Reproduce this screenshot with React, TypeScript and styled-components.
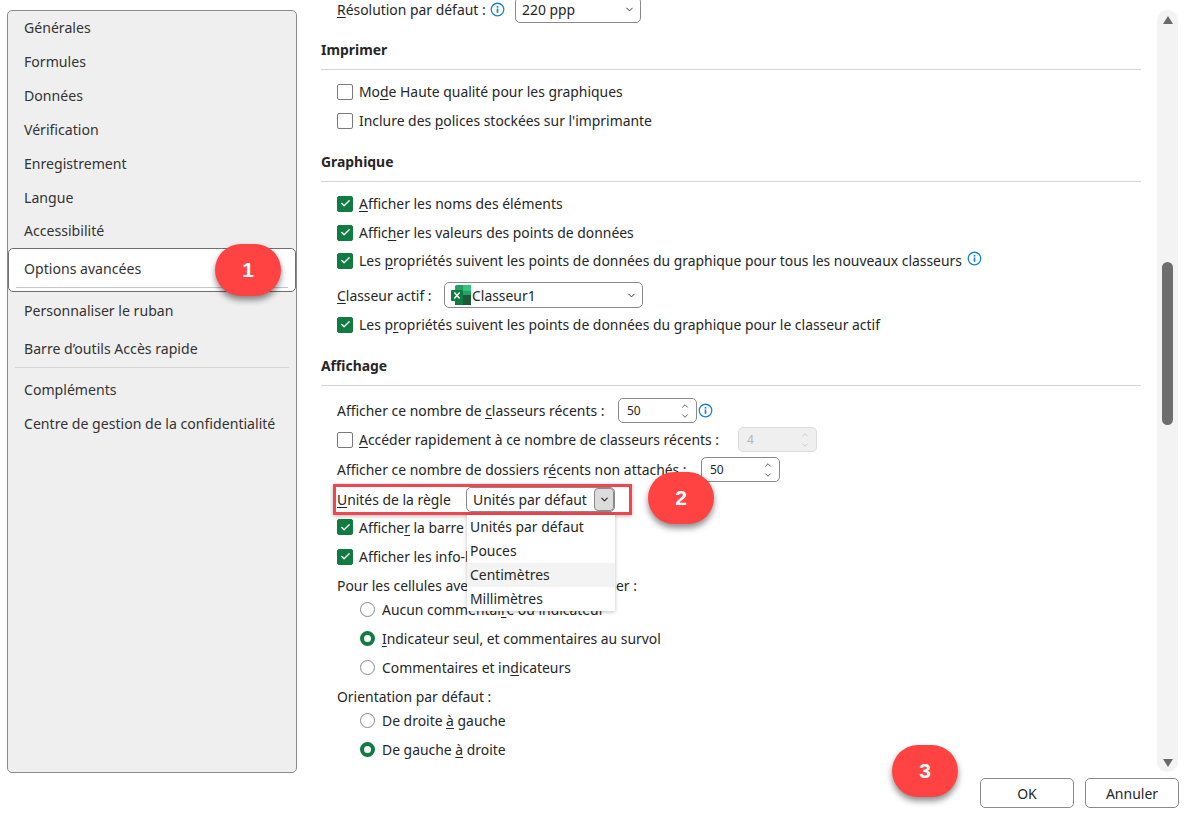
import React from 'react'
import styled, { createGlobalStyle } from 'styled-components'
import { ChevronDown, ChevronUp, Check } from 'lucide-react'

const GlobalStyle = createGlobalStyle`
  html, body {
    margin: 0;
    padding: 0;
    background: #fff;
  }
  body {
    font-family: "Noto Sans", "Open Sans", Arial, sans-serif;
    font-size: 14px;
    color: #262626;
  }
`

const InfoIcon = ({ ml, up }: { ml?: number; up?: number }) => (
  <InfoSvg viewBox="0 0 16 16" $ml={ml} $up={up}>
    <circle cx="8" cy="8" r="6.7" fill="none" stroke="#1d82c9" strokeWidth="1.4" />
    <rect x="7.1" y="7" width="1.8" height="4.6" fill="#1d82c9" />
    <rect x="7.1" y="4.2" width="1.8" height="1.8" fill="#1d82c9" />
  </InfoSvg>
)

const ExcelIcon = () => (
  <ExcelSvg viewBox="0 0 20 20">
    <rect x="4" y="0" width="16" height="20" rx="1.5" fill="#21a366" />
    <rect x="12" y="0" width="8" height="6" fill="#33c481" />
    <rect x="12" y="10" width="8" height="10" fill="#185c37" />
    <rect x="4" y="10" width="8" height="10" fill="#107c41" />
    <rect x="0" y="5" width="12" height="11" rx="1" fill="#107c41" />
    <path d="M3.4 7.6 L8.6 13.4 M8.6 7.6 L3.4 13.4" stroke="#fff" strokeWidth="1.5" />
  </ExcelSvg>
)

const CheckMark = () => <Check size={11} strokeWidth={3} color="#fff" />

const CheckRow = ({ h, on, children }: { h: number; on?: boolean; children: React.ReactNode }) => (
  <Row $h={h}>
    <Box $on={on}>{on && <CheckMark />}</Box>
    <span>{children}</span>
  </Row>
)

const RadioRow = ({ h, top, on, children }: { h: number; top?: number; on?: boolean; children: React.ReactNode }) => (
  <Row $h={h} $top={top} $indent>
    <Radio $on={on} />
    <span>{children}</span>
  </Row>
)

const Spinner = ({ value, off }: { value: string; off?: boolean }) => (
  <SpinBox $off={off}>
    <span>{value}</span>
    <SpinArrows $off={off}>
      <ChevronUp size={10} strokeWidth={2} />
      <ChevronDown size={10} strokeWidth={2} />
    </SpinArrows>
  </SpinBox>
)

const App = () => {
  return (
    <Window>
      <GlobalStyle />
      <Sidebar>
        <NavItem $h={34}>Générales</NavItem>
        <NavItem $h={34}>Formules</NavItem>
        <NavItem $h={34}>Données</NavItem>
        <NavItem $h={34}>Vérification</NavItem>
        <NavItem $h={34}>Enregistrement</NavItem>
        <NavItem $h={34}>Langue</NavItem>
        <NavItem $h={33}>Accessibilité</NavItem>
        <ActiveItem>
          Options avancées
          <Badge $left={206} $top={-5}>1</Badge>
        </ActiveItem>
        <NavItem $h={39}>Personnaliser le ruban</NavItem>
        <NavItem $h={36}>Barre d’outils Accès rapide</NavItem>
        <NavRule />
        <NavItem $h={34}>Compléments</NavItem>
        <NavItem $h={34}>Centre de gestion de la confidentialité</NavItem>
      </Sidebar>

      <RightSide>
        <Body>
          <Content>
            <Scroller>
              <Row $h={27}>
                <Label $w={152}><u>R</u>ésolution par défaut :</Label>
                <InfoIcon />
                <Select $w={126} $ml={10}>
                  <span>220 ppp</span>
                  <ChevronDown size={11} strokeWidth={2} />
                </Select>
              </Row>

              <Heading>Imprimer</Heading>
              <CheckRow h={29}>Mo<u>d</u>e Haute qualité pour les graphiques</CheckRow>
              <CheckRow h={29}>Inclure des <u>p</u>olices stockées sur l'imprimante</CheckRow>

              <Heading>Graphique</Heading>
              <CheckRow h={29} on><u>A</u>fficher les noms des éléments</CheckRow>
              <CheckRow h={29} on>Affic<u>h</u>er les valeurs des points de données</CheckRow>
              <Row $h={27}>
                <Box $on><CheckMark /></Box>
                <span>Les <u>p</u>ropriétés suivent les points de données du graphique pour tous les nouveaux classeurs</span>
                <InfoIcon ml={5} up={4} />
              </Row>
              <Row $h={30} $top={6}>
                <Label $w={107}><u>C</u>lasseur actif :</Label>
                <Select $w={199}>
                  <SelectValue><ExcelIcon />Classeur1</SelectValue>
                  <ChevronDown size={11} strokeWidth={2} />
                </Select>
              </Row>
              <CheckRow h={29} on>Les p<u>r</u>opriétés suivent les points de données du graphique pour le classeur actif</CheckRow>

              <Heading>Affichage</Heading>
              <Row $h={29} $top={10}>
                <Label $w={281}>Afficher ce nombre de <u>c</u>lasseurs récents :</Label>
                <Spinner value="50" />
                <InfoIcon />
              </Row>
              <Row $h={29}>
                <Box />
                <Label $w={379}><u>A</u>ccéder rapidement à ce nombre de classeurs récents :</Label>
                <Spinner value="4" off />
              </Row>
              <Row $h={31}>
                <Label $w={364}>Afficher ce nombre de dossiers r<u>é</u>cents non attachés :</Label>
                <Spinner value="50" />
              </Row>
              <UnitsFrame>
                <Label $w={129}><u>U</u>nités de la règle</Label>
                <Combo>
                  <span>Unités par défaut</span>
                  <ComboButton><ChevronDown size={11} strokeWidth={2.4} /></ComboButton>
                </Combo>
                <ComboMenu>
                  <MenuItem>Unités par défaut</MenuItem>
                  <MenuItem>Pouces</MenuItem>
                  <MenuItem $hover>Centimètres</MenuItem>
                  <MenuItem>Millimètres</MenuItem>
                </ComboMenu>
                <Badge $left={312} $top={-15}>2</Badge>
              </UnitsFrame>
              <CheckRow h={24} on>Affiche<u>r</u> la barre de formule</CheckRow>
              <Row $h={29} $top={3}>
                <Box $on><CheckMark /></Box>
                <span>Afficher les info-bulles de fonctions</span>
              </Row>
              <Row $h={26} $top={1}>Pour les cellules avec commentaires, afficher :</Row>
              <RadioRow h={22}>Aucun commentai<u>r</u>e ou indicateur</RadioRow>
              <RadioRow h={29} top={4} on><u>I</u>ndicateur seul, et commentaires au survol</RadioRow>
              <RadioRow h={29}>Commentaires et in<u>d</u>icateurs</RadioRow>
              <Row $h={26} $top={1}>Orientation par défaut :</Row>
              <RadioRow h={22}>De droite <u>à</u> gauche</RadioRow>
              <RadioRow h={29} top={4} on>De gauche <u>à</u> droite</RadioRow>
            </Scroller>
          </Content>
          <ScrollTrack>
            <ArrowUp />
            <ThumbSlot><Thumb /></ThumbSlot>
            <ArrowDown />
          </ScrollTrack>
        </Body>

        <Footer>
          <Badge $left={595} $top={-33}>3</Badge>
          <Button>OK</Button>
          <Button>Annuler</Button>
        </Footer>
      </RightSide>
    </Window>
  )
}

export default App

const Window = styled.div`
  display: flex;
  width: 1186px;
  height: 817px;
  overflow: hidden;
  box-sizing: border-box;
  padding: 10px 7px 0 7px;
`
const Sidebar = styled.nav`
  flex: 0 0 290px;
  height: 763px;
  box-sizing: border-box;
  background: #efefef;
  border: 1px solid #8c8c8c;
  border-radius: 5px;
  font-size: 14.1px;
`
const NavItem = styled.div<{ $h: number }>`
  display: flex;
  align-items: center;
  box-sizing: border-box;
  height: ${(p) => p.$h}px;
  padding: 0 0 2px 16px;
  white-space: nowrap;
  color: #333;
`
const ActiveItem = styled.div`
  position: relative;
  display: flex;
  align-items: center;
  box-sizing: border-box;
  height: 44px;
  padding: 0 0 4px 15px;
  background: #fff;
  border: 1px solid #707070;
  border-radius: 5px;
  color: #333;
  &::after {
    content: '';
    position: absolute;
    left: 7px;
    right: 7px;
    bottom: 3px;
    height: 1px;
    background: #c8c8c8;
  }
`
const NavRule = styled.div`
  height: 1px;
  margin: 0 7px 5px;
  background: #d6d6d6;
`
const Badge = styled.div<{ $left: number; $top: number }>`
  position: absolute;
  z-index: 5;
  left: ${(p) => p.$left}px;
  top: ${(p) => p.$top}px;
  width: 66px;
  height: 52px;
  display: flex;
  align-items: center;
  justify-content: center;
  border-radius: 26px;
  background: #ff4343;
  box-shadow: 0 4px 6px rgba(0, 0, 0, 0.45);
  color: #fff;
  font-family: "Liberation Sans", Arial, sans-serif;
  font-weight: 700;
  font-size: 21px;
`
const RightSide = styled.div`
  flex: 1;
  display: flex;
  flex-direction: column;
  min-width: 0;
`
const Body = styled.div`
  display: flex;
  height: 763px;
  margin-left: 24px;
`
const Content = styled.main`
  width: 820px;
  height: 773px;
  margin-top: -10px;
  overflow: hidden;
  font-size: 13.92px;
`
const Scroller = styled.div`
  margin-top: -4px;
`
const Row = styled.div<{ $h: number; $indent?: boolean; $top?: number }>`
  display: flex;
  align-items: center;
  height: ${(p) => p.$h}px;
  margin-top: ${(p) => p.$top ?? 0}px;
  padding-left: ${(p) => (p.$indent ? 39 : 16)}px;
  white-space: nowrap;
  u {
    text-underline-offset: 2px;
  }
`
const Label = styled.span<{ $w: number }>`
  flex: none;
  width: ${(p) => p.$w}px;
`
const Heading = styled.div`
  box-sizing: border-box;
  height: 34px;
  margin: 13px 0 7px 0;
  padding-top: 4px;
  border-bottom: 1px solid #d4d4d4;
  font-weight: 700;
  color: #262626;
`
const Box = styled.div<{ $on?: boolean }>`
  flex: none;
  display: flex;
  align-items: center;
  justify-content: center;
  box-sizing: border-box;
  width: 16px;
  height: 16px;
  margin-right: 6px;
  border-radius: 2px;
  background: ${(p) => (p.$on ? '#107c41' : '#fff')};
  border: 1px solid ${(p) => (p.$on ? '#107c41' : '#7a7a7a')};
`
const Radio = styled.div<{ $on?: boolean }>`
  flex: none;
  box-sizing: border-box;
  width: 15px;
  height: 15px;
  margin-right: 7px;
  border-radius: 50%;
  background: #fff;
  border: ${(p) => (p.$on ? '4px solid #107c41' : '1px solid #8a8a8a')};
`
const InfoSvg = styled.svg<{ $ml?: number; $up?: number }>`
  flex: none;
  width: 15px;
  height: 15px;
  margin-left: ${(p) => p.$ml ?? 1}px;
  margin-bottom: ${(p) => p.$up ?? 0}px;
`
const ExcelSvg = styled.svg`
  flex: none;
  width: 20px;
  height: 20px;
  margin-right: 1px;
`
const Select = styled.div<{ $w: number; $ml?: number }>`
  flex: none;
  display: flex;
  align-items: center;
  justify-content: space-between;
  box-sizing: border-box;
  width: ${(p) => p.$w}px;
  height: 26px;
  margin-left: ${(p) => p.$ml ?? 0}px;
  padding: 0 5px 0 6px;
  background: #fff;
  border: 1px solid #8a8a8a;
  border-radius: 5px;
`
const SelectValue = styled.span`
  display: flex;
  align-items: center;
`
const SpinBox = styled.div<{ $off?: boolean }>`
  flex: none;
  display: flex;
  align-items: center;
  justify-content: space-between;
  box-sizing: border-box;
  width: 79px;
  height: 25px;
  padding: 0 6px 0 8px;
  font-size: 12px;
  color: ${(p) => (p.$off ? '#b5b5b5' : '#262626')};
  background: ${(p) => (p.$off ? '#efefef' : '#fff')};
  border: 1px solid ${(p) => (p.$off ? '#dcdcdc' : '#8a8a8a')};
  border-radius: 5px;
`
const SpinArrows = styled.div<{ $off?: boolean }>`
  display: flex;
  flex-direction: column;
  color: ${(p) => (p.$off ? '#c4c4c4' : '#444')};
  svg {
    display: block;
  }
`
const UnitsFrame = styled.div`
  position: relative;
  display: flex;
  align-items: center;
  box-sizing: border-box;
  width: 299px;
  height: 31px;
  margin: -1px 0 0 12px;
  padding-left: 1px;
  border: 3px solid #ef4650;
  box-shadow: 0 1px 4px rgba(0, 0, 0, 0.3);
  white-space: nowrap;
  u {
    text-underline-offset: 2px;
  }
`
const Combo = styled.div`
  position: relative;
  flex: none;
  display: flex;
  align-items: center;
  box-sizing: border-box;
  width: 149px;
  height: 25px;
  padding-left: 6px;
  background: #fff;
  border: 1px solid #8a8a8a;
  border-radius: 5px;
`
const ComboButton = styled.div`
  position: absolute;
  right: 0;
  top: 0;
  bottom: 0;
  width: 20px;
  display: flex;
  align-items: center;
  justify-content: center;
  box-sizing: border-box;
  background: #dcdcdc;
  border: 1px solid #8a8a8a;
  border-radius: 4px;
`
const ComboMenu = styled.div`
  position: absolute;
  z-index: 3;
  left: 131px;
  top: 28px;
  width: 148px;
  background: #fff;
  box-shadow: 0 1px 4px rgba(0, 0, 0, 0.25);
`
const MenuItem = styled.div<{ $hover?: boolean }>`
  display: flex;
  align-items: center;
  box-sizing: border-box;
  height: 24px;
  padding: 0 0 2px 3px;
  background: ${(p) => (p.$hover ? '#f3f3f3' : '#fff')};
`
const ScrollTrack = styled.div`
  flex: none;
  display: flex;
  flex-direction: column;
  align-items: center;
  justify-content: space-between;
  box-sizing: border-box;
  width: 21px;
  height: 762px;
  margin-left: 16px;
  padding: 6px 0 5px;
  background: #f3f3f3;
  border-radius: 10px;
`
const ArrowUp = styled.div`
  width: 0;
  height: 0;
  border-left: 5.5px solid transparent;
  border-right: 5.5px solid transparent;
  border-bottom: 8px solid #6a6a6a;
`
const ArrowDown = styled(ArrowUp)`
  border-bottom: 0;
  border-top: 8px solid #6a6a6a;
`
const ThumbSlot = styled.div`
  flex: 1;
  width: 100%;
  display: flex;
  justify-content: center;
`
const Thumb = styled.div`
  width: 11px;
  height: 163px;
  margin-top: 238px;
  background: #6e6e6e;
  border-radius: 6px;
`
const Footer = styled.footer`
  position: relative;
  display: flex;
  justify-content: flex-end;
  gap: 11px;
  margin-top: 5px;
`
const Button = styled.button`
  width: 94px;
  height: 30px;
  padding: 0;
  font: inherit;
  color: #262626;
  background: #fff;
  border: 1px solid #8a8a8a;
  border-radius: 5px;
`
